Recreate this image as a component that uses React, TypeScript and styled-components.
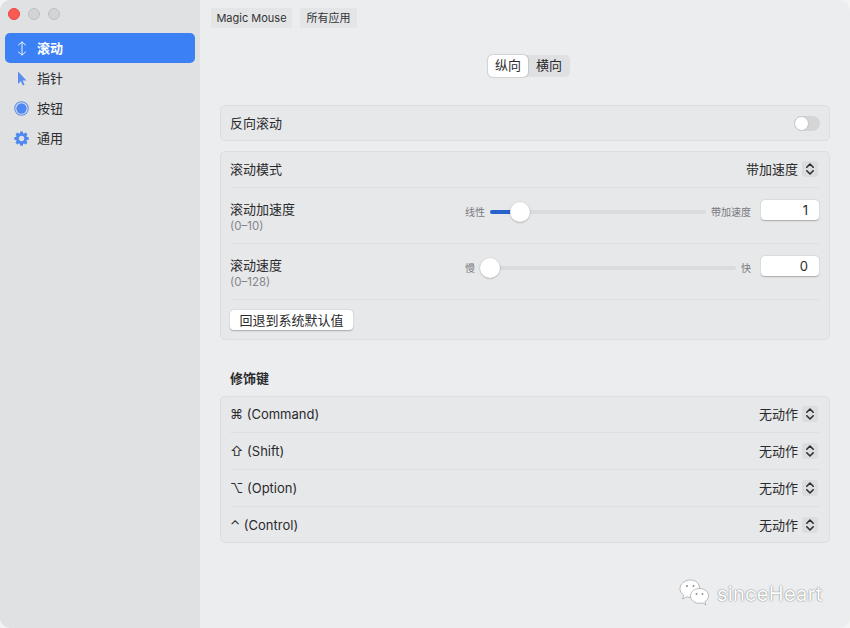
import React from "react";
import styled, { createGlobalStyle } from "styled-components";

const GlobalStyle = createGlobalStyle`
    html, body {
        margin: 0;
        padding: 0;
        background: #f4f4f5;
    }
    body {
        font-family: "Inter", "Noto Sans CJK SC", "Liberation Sans", sans-serif;
        color: #2a2a2c;
    }
`;

const Window = styled.div`
    position: relative;
    width: 850px;
    height: 628px;
    display: flex;
    overflow: hidden;
    border-radius: 10px;
`;

const Sidebar = styled.aside`
    width: 200px;
    flex-shrink: 0;
    background: #e0e1e3;
    padding: 8px 5px 0;
    box-sizing: border-box;
`;

const Lights = styled.div`
    display: flex;
    gap: 8px;
    padding-left: 3px;
    height: 12px;
`;

const Light = styled.span<{ $color: string; $edge: string }>`
    width: 12px;
    height: 12px;
    box-sizing: border-box;
    border-radius: 50%;
    background: ${props => props.$color};
    border: 1px solid ${props => props.$edge};
`;

const NavList = styled.nav`
    margin-top: 13px;
    display: flex;
    flex-direction: column;
`;

const NavItem = styled.div<{ $active?: boolean }>`
    height: 30px;
    border-radius: 5px;
    display: flex;
    align-items: center;
    font-size: 13px;
    line-height: 18px;
    font-weight: ${props => (props.$active ? 600 : 400)};
    color: ${props => (props.$active ? "#ffffff" : "#2c2c2e")};
    background: ${props => (props.$active ? "#3b80f5" : "transparent")};
`;

const NavIcon = styled.span`
    width: 32px;
    box-sizing: border-box;
    padding-left: 1px;
    flex-shrink: 0;
    display: flex;
    justify-content: center;
    align-items: center;
`;

const Main = styled.main`
    flex: 1;
    background: #ecedef;
    padding: 8px 20px 0 11px;
    box-sizing: border-box;
`;

const TopBar = styled.div`
    display: flex;
    gap: 8px;
    height: 20px;
`;

const TopTab = styled.div<{ $width: number }>`
    width: ${props => props.$width}px;
    text-align: center;
    background: #e4e5e7;
    border-radius: 2px;
    font-size: 11px;
    line-height: 20px;
    color: #333335;
`;

const Content = styled.div`
    padding-left: 9px;
`;

const SegmentRow = styled.div`
    display: flex;
    justify-content: center;
    margin: 27px 0 28px 8px;
`;

const Segment = styled.div`
    display: flex;
    height: 22px;
    width: 82px;
    background: #dfe0e2;
    border-radius: 5px;
`;

const SegmentItem = styled.div<{ $active?: boolean }>`
    width: ${props => (props.$active ? "40px" : "42px")};
    text-align: center;
    font-size: 13px;
    line-height: 21px;
    color: #2a2a2c;
    background: ${props => (props.$active ? "#ffffff" : "transparent")};
    border-radius: 5px;
    box-shadow: ${props => (props.$active ? "0 0 1px 1px rgba(0,0,0,0.12)" : "none")};
`;

const Card = styled.section`
    background: #e7e8ea;
    border: 1px solid #dddee0;
    border-radius: 5px;
    padding: 0 9px;
    margin-bottom: 10px;
`;

const Row = styled.div<{ $height: number; $divider?: boolean; $lift?: boolean }>`
    height: ${props => props.$height}px;
    box-sizing: border-box;
    display: flex;
    align-items: center;
    justify-content: space-between;
    padding-bottom: ${props => (props.$lift ? "2px" : "0")};
    font-size: 13px;
    line-height: 18px;
    color: #2a2a2c;
    border-bottom: ${props => (props.$divider ? "1px solid #dfe0e2" : "none")};
`;

const LabelBlock = styled.div`
    display: flex;
    flex-direction: column;
    gap: 1px;
    margin-top: 2px;
`;

const Hint = styled.span`
    font-size: 11.5px;
    line-height: 15px;
    color: #85868a;
`;

const Label = styled.span`
    line-height: 18px;
`;

const Toggle = styled.div`
    width: 26px;
    height: 15px;
    border-radius: 8px;
    background: #d4d5d7;
    position: relative;
`;

const ToggleKnob = styled.div`
    position: absolute;
    left: 0;
    top: 0;
    width: 15px;
    height: 15px;
    box-sizing: border-box;
    border-radius: 50%;
    background: #ffffff;
    border: 1px solid #c4c5c7;
`;

const SelectWrap = styled.div`
    display: flex;
    align-items: center;
    gap: 4px;
    margin-right: 2px;
    font-size: 13px;
    line-height: 18px;
`;

const Stepper = styled.span`
    width: 16px;
    height: 16px;
    border-radius: 3px;
    background: #dcdddf;
    display: flex;
    align-items: center;
    justify-content: center;
`;

const SliderGroup = styled.div`
    display: flex;
    align-items: center;
    width: 355px;
    margin-top: -8px;
`;

const SliderEnd = styled.span<{ $side: "left" | "right" }>`
    font-size: 10px;
    color: #77787b;
    white-space: nowrap;
    margin: ${props => (props.$side === "left" ? "0 5px 0 0" : "0 10px 0 5px")};
`;

const Track = styled.div`
    position: relative;
    flex: 1;
    height: 4px;
    border-radius: 2px;
    background: #dadbdd;
`;

const TrackFill = styled.div`
    position: absolute;
    left: 0;
    top: 0;
    height: 100%;
    border-radius: 2px;
    background: #2a62cc;
`;

const Thumb = styled.div`
    position: absolute;
    top: -8px;
    width: 20px;
    height: 20px;
    border-radius: 50%;
    background: #ffffff;
    box-shadow: 0 0.5px 2px rgba(0, 0, 0, 0.3);
`;

const NumberBox = styled.div`
    width: 58px;
    height: 20px;
    box-sizing: border-box;
    margin: -4px 1px 0 0;
    border-radius: 4px;
    background: #ffffff;
    box-shadow: 0 0.5px 1.5px rgba(0, 0, 0, 0.28);
    text-align: right;
    padding-right: 11px;
    font-size: 13px;
    line-height: 20px;
    color: #2a2a2c;
`;

const ResetButton = styled.button`
    display: block;
    width: 123px;
    height: 20px;
    padding: 0;
    border: none;
    border-radius: 4px;
    background: #ffffff;
    box-shadow: 0 0.5px 1.5px rgba(0, 0, 0, 0.28);
    font-family: inherit;
    font-size: 13px;
    line-height: 20px;
    color: #2a2a2c;
`;

const ResetRow = styled.div`
    height: 39px;
    display: flex;
    align-items: center;
`;

const SectionTitle = styled.h2`
    margin: 28px 0 8px 10px;
    font-size: 13px;
    line-height: 20px;
    font-weight: 700;
    color: #2a2a2c;
`;

const Watermark = styled.div`
    position: absolute;
    left: 679px;
    top: 578px;
    display: flex;
    align-items: center;
    gap: 7px;
    font-size: 20px;
    line-height: 25px;
    letter-spacing: 0.3px;
    color: #ffffff;
    text-shadow: 0 0 1.5px rgba(30, 30, 30, 0.75);
`;

const WatermarkText = styled.span`
    margin-top: 4px;
`;

const Chevrons = () => (
    <svg width="10" height="12" viewBox="0 0 10 12" fill="none" stroke="#2e2e30" strokeWidth="1.6" strokeLinecap="round" strokeLinejoin="round">
        <path d="M1.800 4.200 5 1l3.200 3.200M1.800 7.800 5 11l3.200-3.200" />
    </svg>
);

const Select = ({ value }: { value: string }) => (
    <SelectWrap>
        {value}
        <Stepper>
            <Chevrons />
        </Stepper>
    </SelectWrap>
);

const ScrollIcon = () => (
    <svg width="10" height="15" viewBox="0 0 10 15" fill="none" stroke="#ffffff" strokeWidth="1" strokeLinecap="round" strokeLinejoin="round" opacity="0.9">
        <path d="M5 1v13M1.500 4 5 1l3.500 3M1.500 11 5 14l3.500-3" />
    </svg>
);

const PointerIcon = () => (
    <svg width="10" height="15" viewBox="0 0 10 15">
        <path d="M1 0.500v12.500l2.800-2.700 2 4.200 1.800-.8-2-4.100h3.900z" fill="#5b8def" />
    </svg>
);

const ButtonIcon = () => (
    <svg width="15" height="15" viewBox="0 0 16 16">
        <circle cx="8" cy="8" r="7.200" fill="none" stroke="#5b8def" strokeWidth="1.100" />
        <circle cx="8" cy="8" r="5.500" fill="#4f87f2" />
    </svg>
);

const GearIcon = () => {
    const teeth = [0, 45, 90, 135, 180, 225, 270, 315];
    return (
        <svg width="15" height="15" viewBox="0 0 16 16">
            {teeth.map(angle => (
                <rect key={angle} x="6.400" y="0.400" width="3.200" height="3.400" rx="0.600" fill="#4f87f2" transform={`rotate(${angle} 8 8)`} />
            ))}
            <circle cx="8" cy="8" r="4.400" fill="none" stroke="#4f87f2" strokeWidth="3" />
        </svg>
    );
};

const WeChatIcon = () => (
    <svg width="31" height="27" viewBox="0 0 31 27">
        <g fill="#ffffff" stroke="rgba(50,50,50,0.6)" strokeWidth="0.5">
            <path d="M11.500 1C5.700 1 1 4.900 1 9.700c0 2.700 1.500 5 3.800 6.600L3.600 20l4.300-2.200c1.100.3 2.300.5 3.600.5 6 0 9-4 9-8.600C20.500 4.900 17.300 1 11.500 1z" />
            <path d="M20.500 9.500c-5 0-9 3.300-9 7.400s4 7.400 9 7.400c1 0 2-.2 3-.5l3.400 2-1-3.200c2.200-1.400 3.600-3.400 3.600-5.700 0-4.100-4-7.400-9-7.400z" />
        </g>
        <g fill="#8a8a8a">
            <circle cx="8" cy="7" r="1" />
            <circle cx="14.500" cy="7" r="1" />
            <circle cx="17.500" cy="15" r="0.900" />
            <circle cx="23.500" cy="15" r="0.900" />
        </g>
    </svg>
);

const modifiers = ["⌘ (Command)", "⇧ (Shift)", "⌥ (Option)", "⌃ (Control)"];

// first and last rows are a pixel shorter than the two in the middle
const modifierRowHeight = (index: number) => (index === 0 ? 36 : index === 3 ? 35 : 37);

function App() {
    return (
        <Window>
            <GlobalStyle />
            <Sidebar>
                <Lights>
                    <Light $color="#fb5a53" $edge="#e4473f" />
                    <Light $color="#d3d4d6" $edge="#bfc0c2" />
                    <Light $color="#d3d4d6" $edge="#bfc0c2" />
                </Lights>
                <NavList>
                    <NavItem $active>
                        <NavIcon><ScrollIcon /></NavIcon>滚动
                    </NavItem>
                    <NavItem>
                        <NavIcon><PointerIcon /></NavIcon>指针
                    </NavItem>
                    <NavItem>
                        <NavIcon><ButtonIcon /></NavIcon>按钮
                    </NavItem>
                    <NavItem>
                        <NavIcon><GearIcon /></NavIcon>通用
                    </NavItem>
                </NavList>
            </Sidebar>
            <Main>
                <TopBar>
                    <TopTab $width={81}>Magic Mouse</TopTab>
                    <TopTab $width={57}>所有应用</TopTab>
                </TopBar>
                <Content>
                    <SegmentRow>
                        <Segment>
                            <SegmentItem $active>纵向</SegmentItem>
                            <SegmentItem>横向</SegmentItem>
                        </Segment>
                    </SegmentRow>
                    <Card>
                        <Row $height={34}>
                            <Label>反向滚动</Label>
                            <Toggle><ToggleKnob /></Toggle>
                        </Row>
                    </Card>
                    <Card>
                        <Row $height={36} $divider $lift>
                            <Label>滚动模式</Label>
                            <Select value="带加速度" />
                        </Row>
                        <Row $height={56} $divider>
                            <LabelBlock>
                                <Label>滚动加速度</Label>
                                <Hint>(0–10)</Hint>
                            </LabelBlock>
                            <SliderGroup>
                                <SliderEnd $side="left">线性</SliderEnd>
                                <Track>
                                    <TrackFill style={{ width: "25px" }} />
                                    <Thumb style={{ left: "20px" }} />
                                </Track>
                                <SliderEnd $side="right">带加速度</SliderEnd>
                                <NumberBox>1</NumberBox>
                            </SliderGroup>
                        </Row>
                        <Row $height={56} $divider>
                            <LabelBlock>
                                <Label>滚动速度</Label>
                                <Hint>(0–128)</Hint>
                            </LabelBlock>
                            <SliderGroup>
                                <SliderEnd $side="left">慢</SliderEnd>
                                <Track>
                                    <Thumb style={{ left: "0px" }} />
                                </Track>
                                <SliderEnd $side="right">快</SliderEnd>
                                <NumberBox>0</NumberBox>
                            </SliderGroup>
                        </Row>
                        <ResetRow>
                            <ResetButton>回退到系统默认值</ResetButton>
                        </ResetRow>
                    </Card>
                    <SectionTitle>修饰键</SectionTitle>
                    <Card>
                        {modifiers.map((name, index) => (
                            <Row key={name} $height={modifierRowHeight(index)} $divider={index < 3} $lift={index === 0}>
                                <Label>{name}</Label>
                                <Select value="无动作" />
                            </Row>
                        ))}
                    </Card>
                </Content>
            </Main>
            <Watermark>
                <WeChatIcon />
                <WatermarkText>sinceHeart</WatermarkText>
            </Watermark>
        </Window>
    );
}

export default App;
